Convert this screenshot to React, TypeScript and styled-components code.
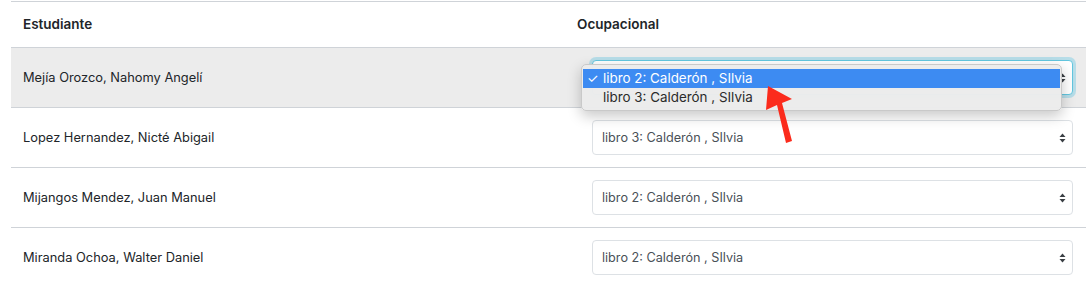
import React from "react";
import styled, { createGlobalStyle } from "styled-components";

const GlobalStyle = createGlobalStyle`
  html, body {
    margin: 0;
    padding: 0;
    background: #ffffff;
    overflow: hidden;
  }
  body {
    font-family: Inter, "Liberation Sans", Arial, sans-serif;
    color: #212529;
  }
`;

const Page = styled.div`
  position: relative;
  width: 1086px;
  height: 285px;
  overflow: hidden;
  padding: 1px 0 0 11px;
  box-sizing: border-box;
`;

const Table = styled.table`
  border-collapse: collapse;
  width: 1089px;
  table-layout: fixed;
`;

const HeadCell = styled.th<{ $w?: number }>`
  ${(p) => (p.$w ? `width: ${p.$w}px;` : "")}
  text-align: left;
  padding: 12px;
  line-height: 21px;
  font-size: 13.5px;
  font-weight: 600;
  color: #212529;
  border-top: 1px solid #cfd3d8;
  border-bottom: 1px solid #cfd3d8;
  box-sizing: border-box;
`;

const Row = styled.tr<{ $shade?: boolean }>`
  background: ${(p) => (p.$shade ? "#ececec" : "#ffffff")};
`;

const Cell = styled.td`
  padding: 12px;
  height: 35px;
  border-top: 1px solid #cfd3d8;
  font-size: 12.85px;
  line-height: 21px;
  color: #212529;
  vertical-align: middle;
  box-sizing: content-box;
`;

const SelectBox = styled.div<{ $focus?: boolean }>`
  position: relative;
  margin: 0 15px;
  height: 35px;
  box-sizing: border-box;
  border: 1px solid ${(p) => (p.$focus ? "#63c6df" : "#dde1e5")};
  border-radius: 4px;
  background: #ffffff;
  box-shadow: ${(p) => (p.$focus ? "0 0 0 3px rgba(120, 205, 228, 0.45)" : "none")};
  display: flex;
  align-items: center;
  justify-content: space-between;
  padding: 0 6px 0 9px;
  font-size: 12.65px;
  color: #495057;
`;

const Caret = styled.svg`
  flex: none;
  width: 7px;
  height: 10px;
`;

const Popup = styled.div`
  position: absolute;
  left: -12px;
  top: 3px;
  width: 481px;
  box-sizing: border-box;
  padding: 4px 1px 3px;
  display: flex;
  flex-direction: column;
  background: rgba(236, 236, 236, 0.98);
  border: 1px solid #c9c9c9;
  border-radius: 5px;
  box-shadow: 0 5px 14px rgba(0, 0, 0, 0.22);
  z-index: 2;
`;

const Option = styled.div<{ $active?: boolean }>`
  display: flex;
  align-items: center;
  height: 19px;
  line-height: 19px;
  font-size: 13.4px;
  color: ${(p) => (p.$active ? "#ffffff" : "#2b2b2b")};
  background: ${(p) => (p.$active ? "#3d8bf2" : "transparent")};
`;

const Check = styled.span`
  flex: none;
  width: 20px;
  box-sizing: border-box;
  padding-left: 4px;
  font-size: 13px;
`;

const Annotation = styled.svg`
  position: absolute;
  left: 750px;
  top: 80px;
  width: 60px;
  height: 70px;
  z-index: 3;
`;

const CaretIcon = () => (
  <Caret viewBox="0 0 7 10">
    <path d="M3.5 0.5 L6.5 4 L0.5 4 Z" fill="#3a3f44" />
    <path d="M0.5 6 L6.5 6 L3.5 9.5 Z" fill="#3a3f44" />
  </Caret>
);

const rows = [
  { name: "Mejía Orozco, Nahomy Angelí", value: "libro 2: Calderón , SIlvia", open: true },
  { name: "Lopez Hernandez, Nicté Abigail", value: "libro 3: Calderón , SIlvia" },
  { name: "Mijangos Mendez, Juan Manuel", value: "libro 2: Calderón , SIlvia" },
  { name: "Miranda Ochoa, Walter Daniel", value: "libro 2: Calderón , SIlvia" },
];

const options = ["libro 2: Calderón , SIlvia", "libro 3: Calderón , SIlvia"];

export default function App() {
  return (
    <Page>
      <GlobalStyle />
      <Table>
        <thead>
          <tr>
            <HeadCell $w={554}>Estudiante</HeadCell>
            <HeadCell>Ocupacional</HeadCell>
          </tr>
        </thead>
        <tbody>
          {rows.map((r, i) => (
            <Row key={i} $shade={i === 0}>
              <Cell>{r.name}</Cell>
              <Cell>
                <SelectBox $focus={r.open}>
                  <span>{r.open ? "" : r.value}</span>
                  <CaretIcon />
                  {r.open && (
                    <Popup>
                      {options.map((o) => (
                        <Option key={o} $active={o === r.value}>
                          <Check>{o === r.value ? "✓" : ""}</Check>
                          {o}
                        </Option>
                      ))}
                    </Popup>
                  )}
                </SelectBox>
              </Cell>
            </Row>
          ))}
        </tbody>
      </Table>
      <Annotation viewBox="0 0 60 70">
        <path d="M18 6 L42 19 L32 23 L42 61 L36 63 L27 25 L16 30 Z" fill="#fb2b1c" />
      </Annotation>
    </Page>
  );
}
